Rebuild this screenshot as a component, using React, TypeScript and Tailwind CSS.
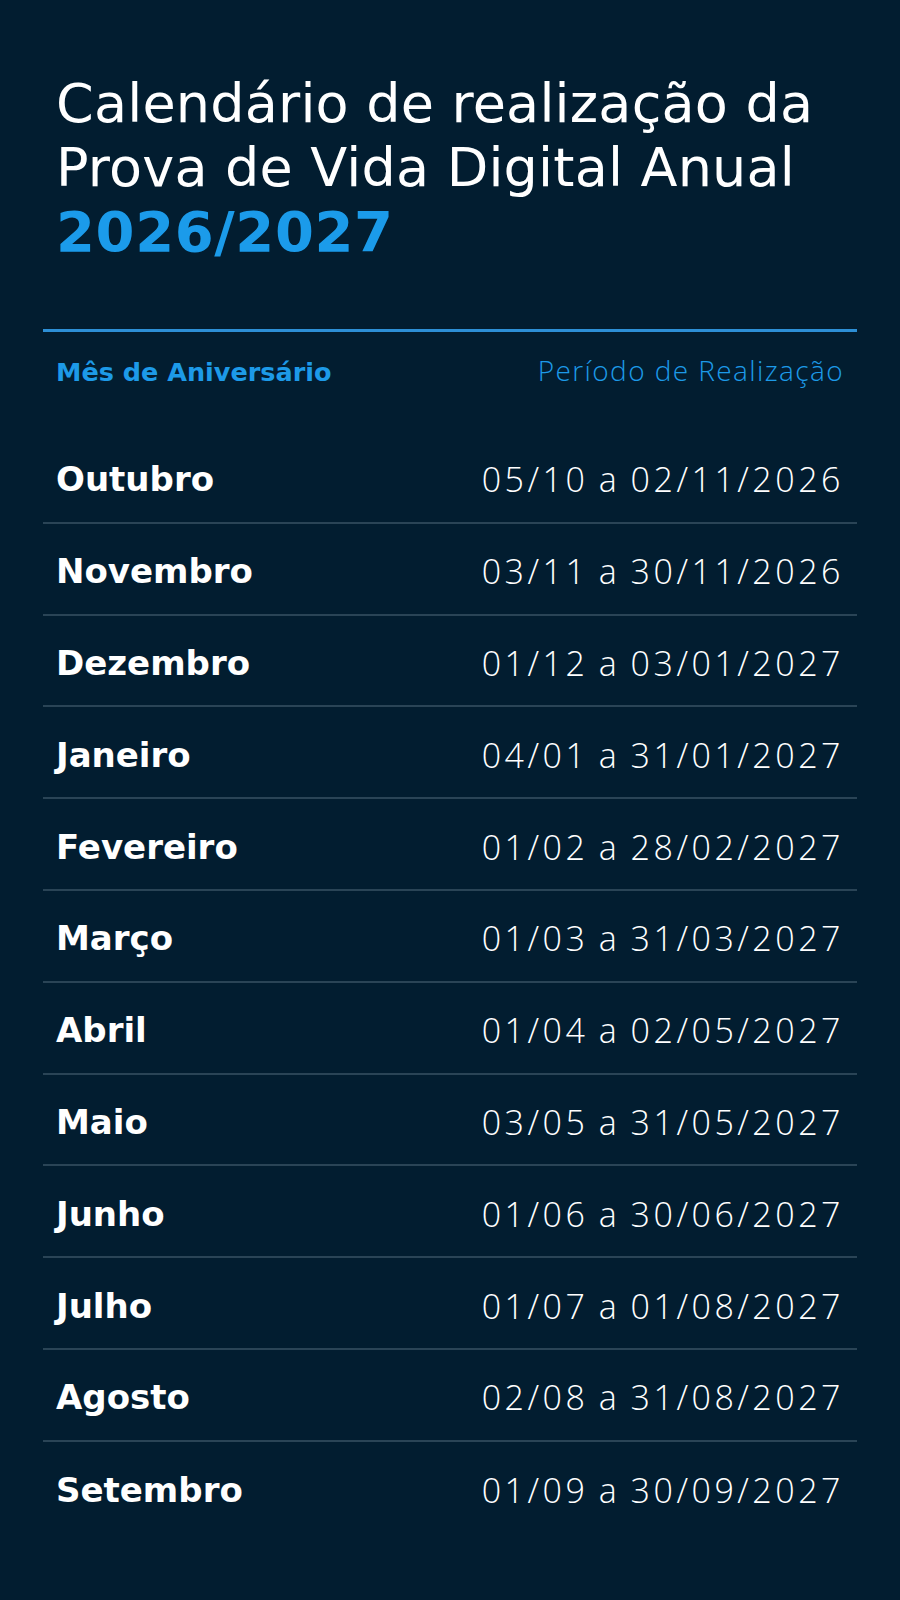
import React from 'react';

const rows = [
  { month: 'Outubro', period: '05/10 a 02/11/2026' },
  { month: 'Novembro', period: '03/11 a 30/11/2026' },
  { month: 'Dezembro', period: '01/12 a 03/01/2027' },
  { month: 'Janeiro', period: '04/01 a 31/01/2027' },
  { month: 'Fevereiro', period: '01/02 a 28/02/2027' },
  { month: 'Março', period: '01/03 a 31/03/2027' },
  { month: 'Abril', period: '01/04 a 02/05/2027' },
  { month: 'Maio', period: '03/05 a 31/05/2027' },
  { month: 'Junho', period: '01/06 a 30/06/2027' },
  { month: 'Julho', period: '01/07 a 01/08/2027' },
  { month: 'Agosto', period: '02/08 a 31/08/2027' },
  { month: 'Setembro', period: '01/09 a 30/09/2027' },
];

const App: React.FC = () => {
  return (
    <div className="min-h-[1600px] w-[900px] bg-[#021d30] px-[43px] pt-[72px] font-['DejaVu_Sans',sans-serif] text-white">
      <h1 className="px-[13px] text-[54px] font-normal leading-[64px] tracking-[0.2px]">
        Calendário de realização da
        <br />
        Prova de Vida Digital Anual
        <br />
        <span className="text-[56px] font-bold tracking-[0.6px] text-[#1b9bea]">2026/2027</span>
      </h1>

      <div className="mt-[64px] border-t-[3px] border-[#2d8fd6]">
        <div className="flex h-[100px] items-baseline justify-between px-[13px] pt-[20px] leading-[36px] text-[#1d9ae8]">
          <span className="text-[25.5px] font-bold">Mês de Aniversário</span>
          <span className="font-['Open_Sans',sans-serif] text-[28px] font-light tracking-[1.4px]">
            Período de Realização
          </span>
        </div>

        {rows.map((row, index) => (
          <div
            key={row.month}
            className={
              index < rows.length - 1
                ? 'flex h-[91.8px] items-center justify-between border-b-2 border-[#2a4456] px-[13px] pt-[6px]'
                : 'flex h-[91.8px] items-center justify-between px-[13px] pt-[6px]'
            }
          >
            <span className="text-[34px] font-bold">{row.month}</span>
            <span className="font-['Open_Sans',sans-serif] text-[34px] font-light tracking-[3.5px] [word-spacing:-2px]">
              {row.period}
            </span>
          </div>
        ))}
      </div>
    </div>
  );
};

export default App;
